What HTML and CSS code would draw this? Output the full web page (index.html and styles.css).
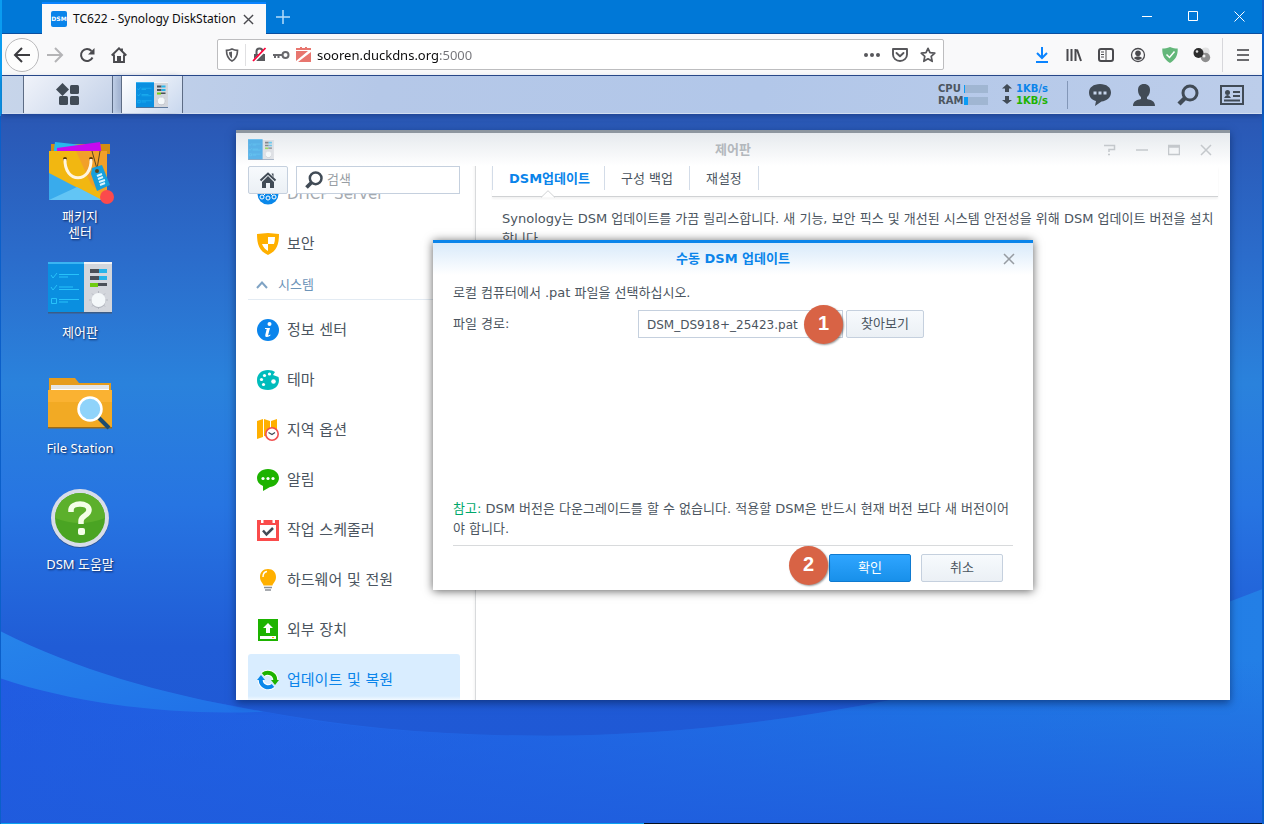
FILE: index.html
```html
<!DOCTYPE html>
<html lang="ko">
<head>
<meta charset="utf-8">
<title>TC622 - Synology DiskStation</title>
<link rel="stylesheet" href="styles.css">
</head>
<body>
<svg class="defs" aria-hidden="true">
  <symbol id="control-panel" viewBox="0 0 64 52">
    <path d="M0 1h64v50H0z" fill="#d3d6dc"/><path d="M0 0h36v51H0z" fill="#0a8fe0"/><path d="M0 0h36v2H0z" fill="#3ab4f2"/><path d="M36 0h28v2H36z" fill="#f3f4f6"/>
    <path d="M0 50h64v1.500H0z" fill="#3c5c86"/>
    <path d="M3 13l2 3 4-5M11 12.500h20M11 15h9M3 25l2 3 4-5M11 25h14M11 27.500h20M11 37.500h20M11 40h9" fill="none" stroke="#27c2fa" stroke-width="1"/>
    <path d="M3.500 36.500h5v5h-5z" fill="none" stroke="#27c2fa"/>
    <path d="M42 7h9v4h-9zM42 14h9v4h-9zM50 21h9v3h-9z" fill="#4b5058"/><path d="M51 7h8v4h-8zM51 14h8v4h-8z" fill="#27b4ea"/><path d="M42 21h8v4h-8z" fill="#6fcc12"/>
    <path d="M50.500 29v18M41 38h19M44 31.500l13 13M57 31.500l-13 13" stroke="#b4b8c0"/><circle cx="50.500" cy="39" r="7" fill="#aeb2ba"/><circle cx="50.500" cy="38" r="7" fill="#f4f8fa"/>
  </symbol>
  <symbol id="close" viewBox="0 0 12 12"><path d="M1 1l10 10M11 1L1 11" fill="none" stroke="currentColor" stroke-width="1.500"/></symbol>
  <symbol id="search" viewBox="0 0 24 24"><circle cx="14" cy="10" r="7" fill="none" stroke="currentColor" stroke-width="3"/><path d="M9 15l-6 6" stroke="currentColor" stroke-width="4.500"/></symbol>
</svg>

<header class="titlebar">
  <div class="browser-tab">
    <span class="favicon">DSM</span>
    <span class="tab-title">TC622 - Synology DiskStation</span>
    <button class="plain" aria-label="탭 닫기"><svg width="11" height="11"><use href="#close"/></svg></button>
  </div>
  <button class="plain new-tab" aria-label="새 탭"><svg width="14" height="14" viewBox="0 0 14 14"><path d="M7 0v14M0 7h14" stroke="#b5dcfa" stroke-width="1.500"/></svg></button>
  <div class="window-buttons">
    <button class="plain" aria-label="최소화"><svg width="11" height="11"><path d="M0 5.500h10" stroke="#fff"/></svg></button>
    <button class="plain" aria-label="최대화"><svg width="11" height="11"><path d="M.5.500h9v9h-9z" fill="none" stroke="#fff"/></svg></button>
    <button class="plain" aria-label="닫기"><svg width="11" height="11"><path d="M.5.500l10 10M10.500.500l-10 10" stroke="#fff"/></svg></button>
  </div>
</header>

<nav class="toolbar">
  <button class="plain back" aria-label="뒤로"><svg width="18" height="18" viewBox="0 0 18 18"><path d="M17 9H2.500M9 2L2 9l7 7" fill="none" stroke="#3c3c40" stroke-width="2"/></svg></button>
  <button class="plain tool" aria-label="앞으로"><svg width="18" height="18" viewBox="0 0 18 18"><path d="M1 9h14.500M9 2l7 7-7 7" fill="none" stroke="#b4b4b6" stroke-width="2"/></svg></button>
  <button class="plain tool" aria-label="새로고침"><svg width="16" height="16" viewBox="0 0 16 16"><path d="M13.500 10.500A6 6 0 1 1 12.500 4" fill="none" stroke="#4a4a4e" stroke-width="2"/><path d="M15.500 1v6.500H9z" fill="#4a4a4e"/></svg></button>
  <button class="plain tool" aria-label="홈"><svg width="16" height="16" viewBox="0 0 16 16"><path d="M.7 8.500L8 1.300l7.300 7.200M3 7.500v7.500h10V7.500M11 1.500v3" fill="none" stroke="#4a4a4e" stroke-width="1.900"/><path d="M6 9h4v6H6z" fill="#4a4a4e"/></svg></button>
  <div class="address">
    <svg width="14" height="14" viewBox="0 0 14 14"><path d="M7 1c2 1 4 1.300 5.500 1.300 0 5-1 8.500-5.500 10.700C2.500 10.800 1.500 7.300 1.500 2.300 3 2.300 5 2 7 1z" fill="none" stroke="#5a5a5e" stroke-width="1.700"/><path d="M7 3.500v7C4.800 9 4.200 7 4 4.300z" fill="#5a5a5e"/></svg>
    <i class="address-rule"></i>
    <svg width="15" height="15" viewBox="0 0 15 15"><path d="M2 7h11v7H2z" fill="#5a5a5e"/><path d="M4.500 7V4.500a3 3 0 0 1 6 0V7" fill="none" stroke="#5a5a5e" stroke-width="2"/><path d="M1.500 14.500L14.500 1.500" stroke="#fff" stroke-width="3"/><path d="M1 14L13.500 1" stroke="#ff0039" stroke-width="1.800"/></svg>
    <svg width="17" height="14" viewBox="0 0 17 14"><circle cx="12.500" cy="7" r="3" fill="none" stroke="#68686c" stroke-width="2"/><path d="M0 7h9.500M2 7v3M5.500 7v3" stroke="#68686c" stroke-width="2"/></svg>
    <svg width="15" height="15" viewBox="0 0 15 15"><path d="M0 1h4V0h2v1h3V0h2v1h4v2H0zM0 4h12L0 14zM15 5v10H2z" fill="#e8766f"/></svg>
    <input class="url" type="text" aria-label="주소" value="sooren.duckdns.org:5000">
    <svg width="16" height="4" viewBox="0 0 16 4"><g fill="#57575b"><circle cx="2" cy="2" r="2"/><circle cx="8" cy="2" r="2"/><circle cx="14" cy="2" r="2"/></g></svg>
    <svg width="16" height="16" viewBox="0 0 16 16"><path d="M1 2h14v5.500a7 6.500 0 0 1-14 0zM4.500 6L8 9.300 11.500 6" fill="none" stroke="#57575b" stroke-width="1.900" stroke-linejoin="round" stroke-linecap="round"/></svg>
    <svg width="16" height="16" viewBox="0 0 16 16"><path d="M8 1.300l2 4.400 4.800.5-3.600 3.200 1 4.900L8 11.800l-4.200 2.500 1-4.900L1.200 6.200 6 5.700z" fill="none" stroke="#57575b" stroke-width="1.700" stroke-linejoin="round"/></svg>
  </div>
  <button class="plain tool" aria-label="다운로드"><svg width="14" height="16" viewBox="0 0 14 16"><path d="M7 0v11M2 6l5 5 5-5M1 15h12" fill="none" stroke="#0a84ff" stroke-width="2"/></svg></button>
  <button class="plain tool" aria-label="라이브러리"><svg width="16" height="16" viewBox="0 0 16 16"><path d="M1.500 2v12M5.500 2v12M9.500 2v12M11 2.500L15 14" stroke="#4a4a4e" stroke-width="2"/></svg></button>
  <button class="plain tool" aria-label="사이드바"><svg width="16" height="14" viewBox="0 0 16 14"><rect x="1" y="1" width="14" height="12" rx="2" fill="none" stroke="#4a4a4e" stroke-width="2"/><path d="M8 1v12M3 4h3M3 6.500h3M3 9h3" stroke="#4a4a4e"/></svg></button>
  <button class="plain tool" aria-label="계정"><svg width="16" height="16" viewBox="0 0 16 16"><circle cx="8" cy="8" r="6.500" fill="none" stroke="#4a4a4e" stroke-width="1.300"/><circle cx="8" cy="6.200" r="2.800" fill="#4a4a4e"/><path d="M3.700 11Q8 7.500 12.300 11 8 15 3.700 11z" fill="#4a4a4e"/></svg></button>
  <button class="plain tool" aria-label="광고 차단"><svg width="16" height="16" viewBox="0 0 16 16"><path d="M8 0c3 1.200 5 1.500 7.700 1.600C16 8.500 13.500 13 8 16 2.500 13 0 8.500.3 1.600 3 1.500 5 1.200 8 0z" fill="#64b77a"/><path d="M4.500 7.500l3 3 5-6" fill="none" stroke="#fff" stroke-width="1.500"/></svg></button>
  <button class="plain tool" aria-label="확장 기능"><svg width="18" height="16" viewBox="0 0 18 16"><circle cx="12.500" cy="4.500" r="4" fill="#e2e2e2"/><circle cx="12.500" cy="10.500" r="4.700" fill="#8e8e8e"/><circle cx="5.500" cy="6" r="5" fill="#2c2c2c"/><circle cx="4" cy="4.500" r="1.300" fill="#ddd"/><circle cx="11" cy="9" r="1.500" fill="#eee"/></svg></button>
  <i class="toolbar-rule"></i>
  <button class="plain tool" aria-label="메뉴"><svg width="12" height="12" viewBox="0 0 12 12"><path d="M0 1h12M0 6h12M0 11h12" stroke="#3c3c40" stroke-width="1.700"/></svg></button>
</nav>

<div class="taskbar">
  <button class="plain main-menu" aria-label="주 메뉴"><svg width="24" height="24" viewBox="0 0 24 24" fill="#414b56"><path d="M6.500 0L13 6.500 6.500 13 0 6.500z"/><rect x="14" y="2" width="9" height="9" rx="1.500"/><rect x="3" y="13" width="9" height="9" rx="1.500"/><rect x="14" y="13" width="9" height="9" rx="1.500"/></svg></button>
  <button class="plain running-app" aria-label="제어판"><svg width="32" height="26"><use href="#control-panel"/></svg></button>
  <div class="monitor">
    <span>CPU</span><i class="meter"><b style="width:4%"></b></i>
    <svg width="10" height="9"><path d="M5 0l5 4.500H7V8H3V4.500H0z" fill="#414b56"/></svg><span class="up">1KB/s</span>
    <span>RAM</span><i class="meter"><b style="width:16%"></b></i>
    <svg width="10" height="9"><path d="M5 8L0 4h3V0h4v4h3z" fill="#414b56"/></svg><span class="down">1KB/s</span>
  </div>
  <div class="tray">
    <button class="plain" aria-label="알림"><svg width="24" height="24" viewBox="0 0 24 24"><path d="M12 1c6.500 0 11 3.500 11 8.500S18.500 18 13.500 18.500L7 23l1-5C3.500 17 1 13.500 1 9.500 1 4.500 5.500 1 12 1z" fill="#414b56"/><path d="M5.500 8.500h3v3h-3zM10.500 8.500h3v3h-3zM15.500 8.500h3v3h-3z" fill="#c5d4ea"/></svg></button>
    <button class="plain" aria-label="사용자"><svg width="24" height="24" viewBox="0 0 24 24"><path d="M12 1c4 0 6 2.500 6 6 0 3-1 5.500-3 7v2c4 1 8 2 8 7H1c0-5 4-6 8-7v-2c-2-1.500-3-4-3-7 0-3.500 2-6 6-6z" fill="#414b56"/></svg></button>
    <button class="plain" aria-label="검색"><svg class="slate" width="24" height="24"><use href="#search"/></svg></button>
    <button class="plain" aria-label="위젯"><svg width="24" height="20" viewBox="0 0 24 20"><path d="M1 1h22v18H1z" fill="none" stroke="#414b56" stroke-width="2"/><circle cx="7.500" cy="7.500" r="2.500" fill="#414b56"/><path d="M4 13q3.500-6 7 0zM13 6h7v2h-7zM13 10h7v2h-7zM4 14.500h16v2H4z" fill="#414b56"/></svg></button>
  </div>
</div>

<main class="desktop">
  <svg class="wallpaper" viewBox="0 0 1260 708" preserveAspectRatio="none" aria-hidden="true">
    <defs>
      <linearGradient id="sky" x1="0" y1="0" x2="0" y2="1"><stop offset="0" stop-color="#2a57b4"/><stop offset=".2" stop-color="#2b6ccb"/><stop offset=".38" stop-color="#2a82dc"/><stop offset=".55" stop-color="#2775e2"/><stop offset=".75" stop-color="#205cd6"/><stop offset="1" stop-color="#1e55d4"/></linearGradient>
      <linearGradient id="ground" x1="0" y1="0" x2="1" y2="0"><stop offset="0" stop-color="#215ce2"/><stop offset=".4" stop-color="#2068e6"/><stop offset=".75" stop-color="#1f78e6"/><stop offset="1" stop-color="#237fe6"/></linearGradient>
      <linearGradient id="shade" x1="0" y1="0" x2="0" y2="1"><stop offset=".3" stop-color="#1f5bdc" stop-opacity="0"/><stop offset="1" stop-color="#1f5bdc" stop-opacity=".8"/></linearGradient>
      <linearGradient id="crest" x1="0" y1="0" x2="1" y2="1"><stop offset="0" stop-color="#2684ea"/><stop offset="1" stop-color="#2070e8"/></linearGradient>
    </defs>
    <path d="M0 0h1260v708H0z" fill="url(#sky)"/>
    <path d="M0 516C80 556 160 578 232 590 340 612 440 620 546 620 760 620 1000 575 1260 474V708H0z" fill="url(#ground)"/>
    <path d="M0 563C80 590 180 600 262 596 340 612 440 620 546 620 760 620 1000 575 1260 474V708H0z" fill="url(#shade)"/>
    <path d="M0 516C80 556 160 578 262 596 180 600 80 590 0 563z" fill="url(#crest)"/>
  </svg>

  <div class="shortcuts">
    <a class="shortcut" href="#package"><svg width="68" height="66" viewBox="0 0 68 66">
      <path d="M5 5h59v10H5z" fill="#d28d13"/><path d="M9 3l45 5-1 10H7z" fill="#25b9ed"/><path d="M11 9L54 3l2 14H11z" fill="#c60af0"/>
      <path d="M3 12h58v49H3z" fill="#f2b711"/><path d="M30 12h31v49L45 45z" fill="#f2a029"/><path d="M3 34l52 27H3z" fill="#39abec"/><path d="M3 61l28-13 25 13z" fill="#62c5f5"/>
      <circle cx="19" cy="20" r="2" fill="#5b3a0a"/><circle cx="45" cy="20" r="2" fill="#5b3a0a"/><path d="M19 20c-1 25 27 25 26 0" fill="none" stroke="#fff5df" stroke-width="3"/>
      <path d="M46 12l5 18 3-18" fill="none" stroke="#5b471f"/><path d="M46 29l10-3 8 20-13 6-6-17z" fill="#169fdc"/><circle cx="51" cy="32" r="2" fill="#5b471f"/><path d="M51 37l5-2M52 40l5-2M53 43l6-2M54 46l5-2" stroke="#d9f4ff" stroke-width="2"/>
      <circle cx="61" cy="58" r="7" fill="#fb4a4c"/></svg><span>패키지<br>센터</span></a>
    <a class="shortcut" href="#control"><svg width="64" height="52"><use href="#control-panel"/></svg><span>제어판</span></a>
    <a class="shortcut" href="#files"><svg width="66" height="54" viewBox="0 0 66 54">
      <path d="M2 1h26l4 5h32v20H2z" fill="#e69c1d"/><path d="M4 8h58v8H4z" fill="#fff"/><path d="M4 11h58M4 9h58" stroke="#ccc"/><path d="M1 13h64v37H1z" fill="#f2aa24"/><path d="M1 13h64v12H1z" fill="#fab232"/><path d="M1 50h64v1.500H1z" fill="#9a6a18"/>
      <path d="M52 41l10 10" stroke="#1d4c70" stroke-width="4"/><circle cx="43" cy="32" r="11.500" fill="#8fd3fa" stroke="#fff" stroke-width="2.500"/></svg><span>File Station</span></a>
    <a class="shortcut" href="#help"><svg width="60" height="64" viewBox="0 0 60 64">
      <circle cx="30" cy="31" r="29" fill="#2b559a"/><circle cx="30" cy="30" r="29" fill="#d8dde9"/><circle cx="30" cy="30" r="25" fill="#4aa423"/><path d="M5 30a25 25 0 0 1 50 0Q30 40 5 30z" fill="#5cb02c"/>
      <path d="M21 24v-2c0-8 18-8 18 0 0 6-8 5-8 11v3" fill="none" stroke="#f4ffe8" stroke-width="5.500"/><rect x="28" y="40" width="7" height="7" rx="2" fill="#f4ffe8"/></svg><span>DSM 도움말</span></a>
  </div>

  <section class="window" aria-label="제어판">
    <header class="window-head">
      <svg class="faded" width="26" height="21"><use href="#control-panel"/></svg>
      <h1>제어판</h1>
      <div class="window-tools">
        <button class="plain" aria-label="도움말"><svg width="12" height="12"><path d="M0 1.500h10.500v4H5V8M4 10.500h2" fill="none" stroke="#c4c8cc" stroke-width="1.500"/></svg></button>
        <button class="plain" aria-label="최소화"><svg width="12" height="12"><path d="M0 6h12" stroke="#c4c8cc" stroke-width="1.500"/></svg></button>
        <button class="plain" aria-label="최대화"><svg width="12" height="12"><path d="M.5 1.500h11v9H.5zM0 3h12" fill="none" stroke="#c4c8cc" stroke-width="1.500"/></svg></button>
        <button class="plain" aria-label="닫기"><svg width="12" height="12"><use href="#close"/></svg></button>
      </div>
    </header>
    <div class="window-body">
      <aside class="sidebar">
        <div class="search-row">
          <button class="button home" aria-label="홈"><svg width="18" height="17" viewBox="0 0 18 17"><path d="M1.500 8.500L9 1.500l7.500 7" fill="none" stroke="#414b56" stroke-width="2"/><path d="M9 4l6 6v6h-4v-5H7v5H3v-6z" fill="#414b56"/><path d="M12.500 1.500h2v4z" fill="#414b56"/></svg></button>
          <label class="search-box"><svg class="slate" width="20" height="20"><use href="#search"/></svg><input type="search" placeholder="검색" aria-label="검색"></label>
        </div>
        <div class="list-clip">
        <ul class="nav-list">
          <li><a href="#dhcp"><svg width="22" height="22" viewBox="0 0 22 22"><circle cx="11" cy="11" r="10.500" fill="#0a88ea"/><path d="M5 14l6-6 6 6" fill="none" stroke="#fff"/><circle cx="5" cy="14" r="2" fill="#0a88ea" stroke="#fff"/><circle cx="11" cy="15" r="2" fill="#0a88ea" stroke="#fff"/><circle cx="17" cy="14" r="2" fill="#0a88ea" stroke="#fff"/></svg><span class="dim">DHCP Server</span></a></li>
          <li><a href="#security"><svg width="22" height="22" viewBox="0 0 22 22"><path d="M11 0c4 0 7 1 11 1 0 10-2 17-11 21C2 18 0 11 0 1c4 0 7-1 11-1z" fill="#ffb000"/><path d="M11 4h7q0 4-1 7h-6zM11 11v7q-4-2-6-7z" fill="#fff"/></svg>보안</a></li>
          <li class="group"><button class="plain"><svg width="12" height="8"><path d="M1 7l5-5.500L11 7" fill="none" stroke="#7fa3c4" stroke-width="2"/></svg>시스템</button></li>
          <li><a href="#info"><svg width="22" height="22" viewBox="0 0 22 22"><circle cx="11" cy="11" r="11" fill="#0a84ec"/><circle cx="12.500" cy="5" r="2" fill="#fff"/><path d="M8 9h5l-2 7.500 2.500-1-.3 1.200q-5 3-5-.5L9.700 10H8z" fill="#fff"/></svg>정보 센터</a></li>
          <li><a href="#theme"><svg width="22" height="22" viewBox="0 0 22 22"><path d="M11 1c3 0 5.500.8 7 2l-2 3 5.500 2c2 7-2.500 13-10.500 13S0 17 0 11 4.500 1 11 1z" fill="#00bcbc"/><g fill="#fff"><circle cx="4.500" cy="10.500" r="1.600"/><circle cx="7.500" cy="6.500" r="1.600"/><circle cx="12.500" cy="5" r="1.600"/><circle cx="6.500" cy="15.500" r="1.600"/><circle cx="16.500" cy="12.500" r="2.300"/></g></svg>테마</a></li>
          <li><a href="#region"><svg width="22" height="22" viewBox="0 0 22 22"><path d="M0 2l6-2v18l-6 2zM7 0l6 2v16l-6-1zM14 2l6-2v14l-6 4z" fill="#ffb000"/><circle cx="15" cy="15" r="6.200" fill="#fff" stroke="#f04f4f" stroke-width="1.600"/><path d="M11.500 13.500L15 15.500l3-2" fill="none" stroke="#414b56" stroke-width="1.300"/></svg>지역 옵션</a></li>
          <li><a href="#notify"><svg width="22" height="22" viewBox="0 0 22 22"><path d="M11 0c6.500 0 11 4 11 9s-5 9-9 9l-7 4v-5C2 15.500 0 12.500 0 9c0-5 4.500-9 11-9z" fill="#1db300"/><g fill="#fff"><circle cx="6" cy="9.500" r="1.600"/><circle cx="11" cy="9.500" r="1.600"/><circle cx="16" cy="9.500" r="1.600"/></g></svg>알림</a></li>
          <li><a href="#tasks"><svg width="22" height="22" viewBox="0 0 22 22"><path d="M0 1h22v21H0z" fill="#fa4b4b"/><path d="M3 6h16v13H3zM4 0h2.500v4H4zM15.500 0H18v4h-2.500z" fill="#fff"/><path d="M6 11.500l3.500 4L16 9" fill="none" stroke="#414b56" stroke-width="2.500"/></svg>작업 스케줄러</a></li>
          <li><a href="#power"><svg width="22" height="22" viewBox="0 0 22 22"><path d="M11 0c5 0 8 3.500 8 8s-3 6-3.500 8.500h-9C6 14 3 12.500 3 8s3-8 8-8z" fill="#ffb000"/><path d="M6 8q0-5 4-5.500" fill="none" stroke="#fff" stroke-width="1.500"/><path d="M7 18.500h8M8 21h6" stroke="#8a9096" stroke-width="1.400"/></svg>하드웨어 및 전원</a></li>
          <li><a href="#devices"><svg width="22" height="22" viewBox="0 0 22 22"><path d="M1 0h20v22H1z" fill="#1db300"/><path d="M11 4l5 5h-3v5H9V9H6zM3 17h16v3H3z" fill="#fff"/><path d="M15 18h2v1h-2z" fill="#ffb000"/></svg>외부 장치</a></li>
          <li><a class="selected" href="#update"><svg width="22" height="22" viewBox="0 0 22 22"><path d="M6 5.500A7.500 7.500 0 0 1 18.300 11M16 16.500A7.500 7.500 0 0 1 3.700 11" fill="none" stroke="#fff" stroke-width="6"/><path d="M6 5.500A7.500 7.500 0 0 1 18.300 11" fill="none" stroke="#1db300" stroke-width="4"/><path d="M14 11h8l-4 5z" fill="#1db300"/><path d="M16 16.500A7.500 7.500 0 0 1 3.700 11" fill="none" stroke="#0a88ea" stroke-width="4"/><path d="M8 11H0l4-5z" fill="#0a88ea"/></svg>업데이트 및 복원</a></li>
        </ul>
        </div>
      </aside>
      <div class="content">
        <div class="tabs" role="tablist">
          <button class="tab active" role="tab" aria-selected="true">DSM업데이트<svg class="notch" width="14" height="8"><path d="M0 7.500L7 .7l7 6.800" fill="#fff" stroke="#d0d2d4"/></svg></button>
          <button class="tab" role="tab">구성 백업</button>
          <button class="tab" role="tab">재설정</button>
        </div>
        <p>Synology는 DSM 업데이트를 가끔 릴리스합니다. 새 기능, 보안 픽스 및 개선된 시스템 안전성을 위해 DSM 업데이트 버전을 설치합니다.</p>
      </div>
    </div>
  </section>

  <section class="dialog" role="dialog" aria-labelledby="dialog-title">
    <header class="dialog-head">
      <h2 id="dialog-title">수동 DSM 업데이트</h2>
      <button class="plain dialog-close" aria-label="닫기"><svg width="12" height="12"><use href="#close"/></svg></button>
    </header>
    <form class="dialog-form">
      <p>로컬 컴퓨터에서 .pat 파일을 선택하십시오.</p>
      <div class="file-row">
        <label for="path">파일 경로:</label>
        <div class="marked"><input id="path" class="path" type="text" value="DSM_DS918+_25423.pat"><span class="step step-one">1</span></div>
        <button type="button" class="button browse">찾아보기</button>
      </div>
      <p class="note"><em>참고:</em> DSM 버전은 다운그레이드를 할 수 없습니다. 적용할 DSM은 반드시 현재 버전 보다 새 버전이어야 합니다.</p>
      <div class="actions">
        <div class="marked"><span class="step step-two">2</span><button type="button" class="button primary">확인</button></div>
        <button type="button" class="button">취소</button>
      </div>
    </form>
  </section>
</main>
</body>
</html>
```

FILE: styles.css
```css
* { box-sizing: border-box; }
body {
  margin: 0; height: 100vh; overflow: hidden;
  display: flex; flex-direction: column;
  padding: 0 2px 0 1px;
  background: linear-gradient(#0a9cf0, #0a9cf0) 0 0 / 2px 116px no-repeat, #0b5fc9;
  font: 13px/20px "DejaVu Sans", "Noto Sans CJK KR", sans-serif;
  color: #4b5560;
}
h1, h2, p, ul { margin: 0; padding: 0; }
ul { list-style: none; }
a { color: inherit; text-decoration: none; }
svg { display: block; flex: none; }
button, input { font: inherit; color: inherit; }
.defs { position: absolute; width: 0; height: 0; }
.plain { display: flex; align-items: center; justify-content: center; padding: 0; border: 0; background: none; }
.slate { color: #414b56; }

.titlebar { display: flex; height: 34px; flex: none; margin-left: 1px; background: #0078d7; border-bottom: 1px solid #0a4fa0; }
.browser-tab {
  display: flex; align-items: center; width: 224px; margin: 2px 0 -1px 40px; padding: 0 12px 0 9px;
  background: #f9f9fa; border-top: 2px solid #0a84ff; color: #0c0c0d;
  font: 12px/20px "Noto Sans", sans-serif; white-space: nowrap;
}
.tab-title { flex: 1; }
.favicon { width: 16px; height: 16px; margin-right: 6px; border-radius: 2px; background: #0a84ea; color: #fff; font: bold 6px/16px "DejaVu Sans", sans-serif; text-align: center; }
.browser-tab .plain { color: #4a4a4e; }
.new-tab { width: 34px; }
.window-buttons { display: flex; margin-left: auto; }
.window-buttons .plain { width: 46px; }

.toolbar { display: flex; align-items: center; flex: none; height: 42px; margin-left: 1px; padding: 0 3px; background: #f9f9fa; border-bottom: 1px solid #2a4a8c; }
.back { width: 34px; height: 34px; border: 1px solid #b9b9bb; border-radius: 50%; background: #fdfdfd; }
.tool { width: 32px; height: 32px; }
.address {
  display: flex; align-items: center; flex: 1; gap: 6px; height: 31px;
  margin: 0 82px; padding: 0 7px; border: 1px solid #bdbdbf; border-radius: 2px; background: #fff;
}
.address-rule { width: 1px; height: 22px; background: #e0e0e2; }
.url {
  flex: 1; min-width: 0; border: 0; padding: 0; outline: 0;
  font: 13px/22px "Noto Sans", sans-serif;
  color: transparent; background: linear-gradient(90deg, #0c0c0d 122px, #737378 122px); background-clip: text; -webkit-background-clip: text;
}
.address svg:nth-last-child(-n+2) { margin-left: 6px; }
.toolbar-rule { width: 1px; height: 34px; margin: 0 4px; background: #d7d7db; }

.taskbar {
  display: flex; flex: none; height: 38px; margin-left: 1px; padding: 0 8px 0 21px; z-index: 1;
  background: linear-gradient(100deg, #c7d5ea, #b5c8e8 30%, #b2c7e9 60%, #bccdea);
  border-bottom: 1px solid #d3def0; box-shadow: 0 2px 5px #14327080;
}
.main-menu { width: 90px; border: solid #5d6c85; border-width: 0 1px; background: linear-gradient(135deg, #f0f3fa, #c3d1e8); }
.running-app { width: 62px; margin-left: 8px; border: solid #5d6c85; border-width: 0 1px; background: linear-gradient(135deg, #fff, #c8d7ee); box-shadow: -5px 0 5px #5d72994d; }
.monitor {
  display: grid; grid-template-columns: 26px 38px 14px 36px; grid-auto-rows: 12px; align-content: center; align-items: center; align-self: center;
  height: 28px; margin-left: auto; margin-right: 10px; padding-right: 15px; border-right: 1px solid #8397b8;
  font: bold 10px/12px "DejaVu Sans", sans-serif;
}
.meter { display: block; width: 24px; height: 8px; background: #a0b6d2; }
.meter b { display: block; height: 8px; background: #0a9cf5; }
.up { color: #0a84ea; }
.down { color: #1db300; }
.tray { display: flex; }
.tray .plain { width: 44px; }

.desktop { position: relative; flex: 1; min-height: 0; overflow: hidden; }
.desktop::after { content: ""; position: absolute; inset: auto 0 0; height: 1px; background: linear-gradient(90deg, #0aa0f0 51%, #04101f 51%); }
.wallpaper { position: absolute; inset: 0; width: 100%; height: 100%; }
.shortcuts { position: relative; display: grid; grid-auto-rows: 116px; width: 96px; padding-top: 26px; margin-left: 31px; }
.shortcut {
  display: grid; grid-template-rows: 64px auto; row-gap: 4px; align-content: start; place-items: center;
  color: #fff; font: 13px/16px "Noto Sans", "Noto Sans CJK KR", sans-serif; text-align: center; text-shadow: 1px 1px 2px #0c2458;
}

.window {
  position: absolute; left: 235px; right: 32px; top: 16px; height: 570px;
  display: flex; flex-direction: column; overflow: hidden;
  background: #fff; border-top: 3px solid #8d969f; box-shadow: 0 3px 8px #071f5299;
}
.window-head {
  display: grid; grid-template-columns: 128px 1fr 128px; align-items: center; flex: none; height: 33px; padding: 0 12px;
  background: linear-gradient(#e6eaee, #fff);
}
.window-head h1 { color: #b3b8bd; font-size: 13px; line-height: 20px; text-align: center; }
.faded { opacity: .65; }
.window-tools { display: flex; justify-content: flex-end; color: #c4c8cc; margin-right: -4px; }
.window-tools .plain { width: 32px; height: 24px; }
.window-body { display: flex; flex: 1; min-height: 0; }
.sidebar { display: flex; flex-direction: column; width: 240px; flex: none; padding: 0 15px 0 12px; border-right: 1px solid #d8dadc; box-shadow: inset -3px 0 3px -2px #0000000d; }
.search-row { display: flex; gap: 8px; height: 28px; flex: none; }
.button { display: flex; align-items: center; justify-content: center; width: 82px; height: 28px; padding: 0; border: 1px solid #c5d0de; border-radius: 2px; background: linear-gradient(#f7fafd, #ebf0f5); }
.home { width: 40px; flex: none; }
.search-box { display: flex; align-items: center; flex: 1; min-width: 0; padding-left: 7px; gap: 3px; border: 1px solid #c5d0de; }
.search-box input { flex: 1; min-width: 0; border: 0; padding: 0; background: none; outline: 0; }
.search-box input::placeholder { color: #989ea4; }
.list-clip { flex: 1; min-height: 0; overflow: hidden; }
.nav-list { margin-top: -26px; font-size: 15px; }
.nav-list a { display: flex; align-items: center; gap: 8px; height: 50px; padding: 2px 0 0 9px; border-radius: 3px; }
.nav-list .dim { color: #a5aab0; }
.nav-list a.selected { background: linear-gradient(#d9edff 42px, #fff 48px); color: #0a84ea; }
.group { height: 32px; margin-bottom: 4px; border-bottom: 1px solid #e3ebf3; }
.group .plain { gap: 10px; height: 34px; padding-left: 8px; color: #6d94b8; font-size: 13px; }
.content { flex: 1; padding: 0 12px 0 16px; }
.tabs { display: flex; height: 31px; border-bottom: 1px solid #d0d2d4; box-shadow: 0 2px 2px #0000000d; }
.tab { position: relative; height: 24px; padding: 2px 16px 0; border: 0; border-right: 1px solid #d3dce8; background: none; }
.tab.active { padding: 2px 14px 0 16px; border-left: 1px solid #d3dce8; color: #0a84ea; font-weight: bold; }
.notch { position: absolute; left: calc(50% - 7px); top: 24px; }
.content p { padding: 12px 0 0 10px; }

.dialog {
  position: absolute; left: 432px; top: 126px; width: 600px; min-height: 350px;
  display: flex; flex-direction: column;
  background: #fff; border-top: 3px solid #0a84ea; box-shadow: 0 1px 9px #000000a0;
}
.dialog-head { display: grid; grid-template-columns: 48px 1fr 48px; align-items: center; height: 32px; background: linear-gradient(#d9eafa, #fff); }
.dialog-head h2 { grid-column: 2; color: #0a84ea; font-size: 13px; line-height: 20px; text-align: center; }
.dialog-close { height: 32px; color: #979ca2; }
.dialog-form { display: flex; flex-direction: column; flex: 1; padding: 8px 20px 8px; }
.file-row { display: flex; align-items: center; gap: 3px; margin-top: 7px; }
.file-row label { width: 182px; }
.marked { position: relative; }
.path { display: block; width: 205px; height: 28px; padding: 2px 8px 0; border: 1px solid #c5d0de; font-size: 12px; background: #fff; }
.browse { width: 78px; }
.note { margin-top: auto; padding-bottom: 6px; border-bottom: 1px solid #d8dadc; }
.note em { color: #00a86b; font-style: normal; }
.actions { display: flex; justify-content: flex-end; gap: 10px; padding: 8px 10px 0; }
.primary { border-color: #0f7ad0; background: linear-gradient(#2fa5ff, #1890ea); color: #fff; }
.step {
  position: absolute; width: 39px; height: 39px; border-radius: 50%; background: #d86345; color: #fff;
  font: bold 20px/36px "Liberation Sans", sans-serif; text-align: center; box-shadow: 1px 1px 2px #00000066;
}
.step-one { right: 0; top: -5px; }
.step-two { right: 83px; top: -8px; }
```
